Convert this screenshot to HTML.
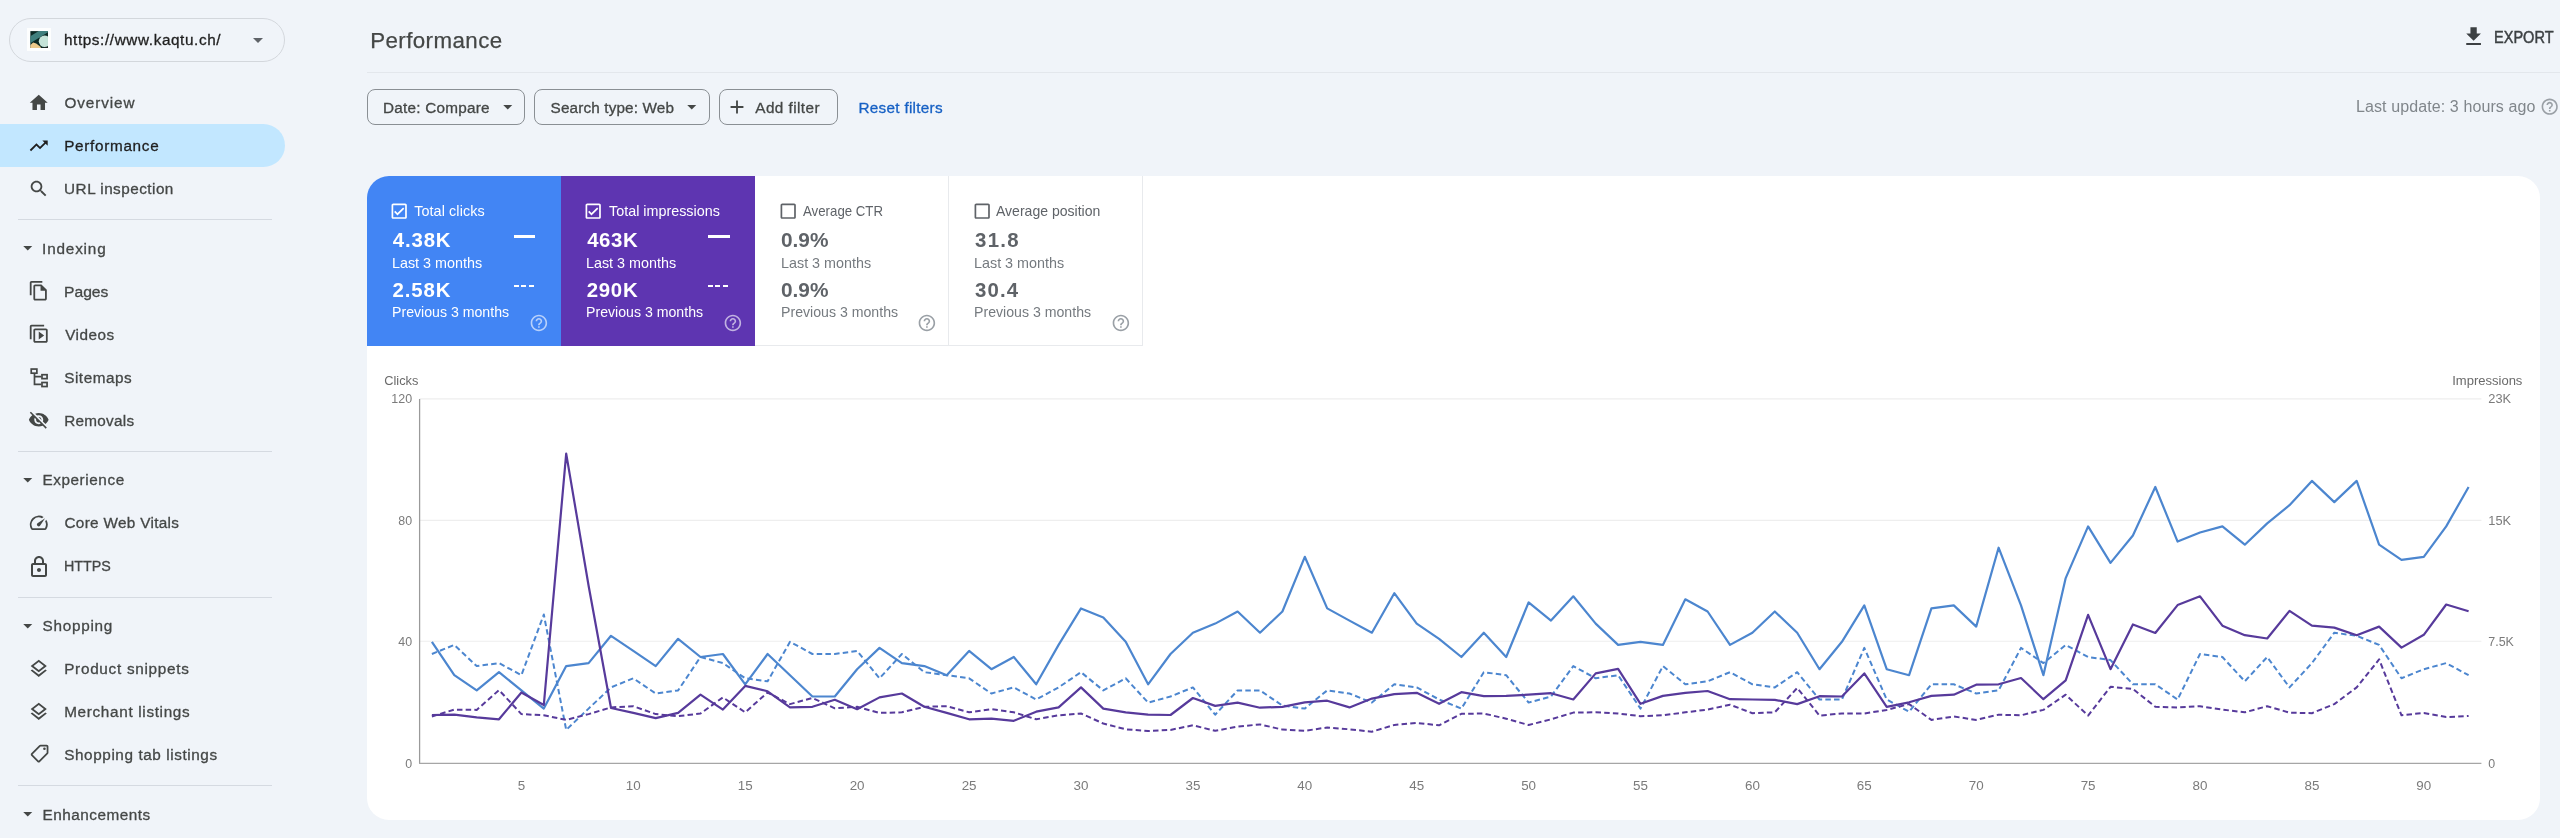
<!DOCTYPE html><html lang="en"><head><meta charset="utf-8"><title>Performance</title><style>
html,body{margin:0;padding:0}
body{width:2560px;height:838px;overflow:hidden;background:#f0f4f9;font-family:"Liberation Sans", Arial, sans-serif;position:relative}
.t{position:absolute;white-space:nowrap;transform-origin:0 50%;display:block}
.ic{position:absolute;display:block}
.abs{position:absolute}
.hr{position:absolute;height:1px;background:#d5dae1}
.chip{position:absolute;box-sizing:border-box;border:1px solid #8a8f94;border-radius:8px;height:35.4px;top:89.4px}
.tile{position:absolute;top:0;height:170px;width:194px;box-sizing:border-box}

</style></head><body><div id="app" style="position:absolute;left:0;top:0;width:2560px;height:838px;will-change:transform">
<nav class="abs" style="left:0;top:0;width:300px;height:838px">
<div class="abs" style="left:9px;top:18px;width:276px;height:43.5px;box-sizing:border-box;border:1px solid #d3d7dc;border-radius:22px"></div>
<svg class="ic" style="left:26.9px;top:27.9px" width="24.4" height="23.4" viewBox="0 0 24.4 23.4"><defs><clipPath id="fv"><rect width="17.8" height="17"/></clipPath></defs><rect width="24.4" height="23.4" fill="#fdfefe"/><g transform="translate(3.2,3.1)" clip-path="url(#fv)"><rect width="17.8" height="17" fill="#0c2925"/><path d="M0 5.2 L8.6 0 L17.8 0 L17.8 1.2 L0 12.2z" fill="#3f7f7d"/><path d="M0 17 L0 14.2 L2.9 11.4 L6 12.4 L10.6 16 L10.6 17z" fill="#ecc98b"/><circle cx="14.4" cy="10.2" r="5.8" fill="#c5e3d8"/><rect x="13.6" y="16.1" width="4.2" height=".9" fill="#2a2a2a"/></g></svg>
<svg class="ic" style="left:246.20px;top:28.40px" width="24.00" height="24.00" viewBox="0 0 24 24" fill="#5f6368"><path d="M7 10l5 5 5-5z"/></svg>
<div class="abs" style="left:0;top:124px;width:284.5px;height:43px;background:#c2e7ff;border-radius:0 21.5px 21.5px 0"></div>
<svg class="ic" style="left:28.05px;top:91.55px" width="21.50" height="21.50" viewBox="0 0 24 24" fill="#444746"><path d="M10 20v-6h4v6h5v-8h3L12 3 2 12h3v8z"/></svg>
<svg class="ic" style="left:28.05px;top:134.85px" width="21.50" height="21.50" viewBox="0 0 24 24" fill="#1f1f1f"><path d="M16 6l2.29 2.29-4.88 4.88-4-4L2 16.59 3.41 18l6-6 4 4 6.3-6.29L22 12V6z"/></svg>
<svg class="ic" style="left:28.05px;top:178.15px" width="21.50" height="21.50" viewBox="0 0 24 24" fill="#444746"><path d="M15.5 14h-.79l-.28-.27C15.41 12.59 16 11.11 16 9.5 16 5.91 13.09 3 9.5 3S3 5.91 3 9.5 5.91 16 9.5 16c1.61 0 3.09-.59 4.23-1.57l.27.28v.79l5 4.99L20.49 19l-4.99-5zm-6 0C7.01 14 5 11.99 5 9.5S7.01 5 9.5 5 14 7.01 14 9.5 11.99 14 9.5 14z"/></svg>
<svg class="ic" style="left:28.05px;top:280.25px" width="21.50" height="21.50" viewBox="0 0 24 24" fill="#444746"><path d="M16 1H4c-1.1 0-2 .9-2 2v14h2V3h12V1zm-1 4H8c-1.1 0-1.99.9-1.99 2L6 21c0 1.1.89 2 1.99 2H19c1.1 0 2-.9 2-2V11l-6-6zM8 21V7h6v5h5v9H8z"/></svg>
<svg class="ic" style="transform:scaleY(-1);left:28.15px;top:323.15px" width="21.50" height="21.50" viewBox="0 0 24 24" fill="#444746"><path d="M4 6H2v14c0 1.1.9 2 2 2h14v-2H4V6zm16-4H8c-1.1 0-2 .9-2 2v12c0 1.1.9 2 2 2h12c1.1 0 2-.9 2-2V4c0-1.1-.9-2-2-2zm0 14H8V4h12v12zM12 5.5v9l6-4.5z"/></svg>
<svg class="ic" style="left:28.05px;top:366.75px" width="21.5" height="21.5" viewBox="0 0 24 24" fill="none" stroke="#444746" stroke-width="1.9"><rect x="3.6" y="2.3" width="6.3" height="4.6"/><rect x="15.6" y="8.6" width="5.7" height="4.4"/><rect x="15.6" y="17.3" width="5.7" height="4.5"/><path d="M7.25 7.5V19.5H14.7M7.25 10.85H14.7"/></svg>
<svg class="ic" style="left:28.05px;top:409.35px" width="21.50" height="21.50" viewBox="0 0 24 24" fill="#444746"><path d="M12 7c2.76 0 5 2.24 5 5 0 .65-.13 1.26-.36 1.83l2.92 2.92c1.51-1.26 2.7-2.89 3.43-4.75-1.73-4.39-6-7.5-11-7.5-1.4 0-2.74.25-3.98.7l2.16 2.16C10.74 7.13 11.35 7 12 7zM2 4.27l2.28 2.28.46.46C3.08 8.3 1.78 10.02 1 12c1.73 4.39 6 7.5 11 7.5 1.55 0 3.03-.3 4.38-.84l.42.42L19.73 22 21 20.73 3.27 3 2 4.27zM7.53 9.8l1.55 1.55c-.05.21-.08.43-.08.65 0 1.66 1.34 3 3 3 .22 0 .44-.03.65-.08l1.55 1.55c-.67.33-1.41.53-2.2.53-2.76 0-5-2.24-5-5 0-.79.2-1.53.53-2.2zm4.31-.78l3.15 3.15.02-.16c0-1.66-1.34-3-3-3l-.17.01z"/></svg>
<svg class="ic" style="left:28.05px;top:512.25px" width="21.50" height="21.50" viewBox="0 0 24 24" fill="#444746"><path d="M20.38 8.57l-1.23 1.85a8 8 0 0 1-.22 7.58H5.07A8 8 0 0 1 15.58 6.85l1.85-1.23A10 10 0 0 0 3.35 19a2 2 0 0 0 1.72 1h13.85a2 2 0 0 0 1.74-1 10 10 0 0 0-.27-10.44zm-9.79 6.84a2 2 0 0 0 2.83 0l5.66-8.49-8.49 5.66a2 2 0 0 0 0 2.83z"/></svg>
<svg class="ic" style="left:26.80px;top:555.10px" width="24.00" height="24.00" viewBox="0 0 24 24" fill="#444746"><path d="M18 8h-1V6c0-2.76-2.24-5-5-5S7 3.24 7 6v2H6c-1.1 0-2 .9-2 2v10c0 1.1.9 2 2 2h12c1.1 0 2-.9 2-2V10c0-1.1-.9-2-2-2zM9 6c0-1.66 1.34-3 3-3s3 1.34 3 3v2H9V6zm9 14H6V10h12v10zm-6-3c1.1 0 2-.9 2-2s-.9-2-2-2-2 .9-2 2 .9 2 2 2z"/></svg>
<svg class="ic" style="left:28.05px;top:658.05px" width="21.50" height="21.50" viewBox="0 0 24 24" fill="#444746"><path d="M11.99 18.54l-7.37-5.73L3 14.07l9 7 9-7-1.63-1.27-7.38 5.74zM12 16l7.36-5.73L21 9l-9-7-9 7 1.63 1.27L12 16zm0-11.47L17.74 9 12 13.47 6.26 9 12 4.53z"/></svg>
<svg class="ic" style="left:28.05px;top:701.05px" width="21.50" height="21.50" viewBox="0 0 24 24" fill="#444746"><path d="M11.99 18.54l-7.37-5.73L3 14.07l9 7 9-7-1.63-1.27-7.38 5.74zM12 16l7.36-5.73L21 9l-9-7-9 7 1.63 1.27L12 16zm0-11.47L17.74 9 12 13.47 6.26 9 12 4.53z"/></svg>
<svg class="ic" style="transform:scaleX(-1);left:29.40px;top:743.40px" width="21.20" height="21.20" viewBox="0 0 24 24" fill="#444746"><path d="M21.41 11.58l-9-9C12.05 2.22 11.55 2 11 2H4c-1.1 0-2 .9-2 2v7c0 .55.22 1.05.59 1.42l9 9c.36.36.86.58 1.41.58s1.05-.22 1.41-.59l7-7c.37-.36.59-.86.59-1.41s-.23-1.06-.59-1.42zM13 20.01L4 11V4h7v-.01l9 9-7 7.02zM6.5 5a1.5 1.5 0 1 0 0 3 1.5 1.5 0 0 0 0-3z"/></svg>
<svg class="ic" style="left:17.45px;top:237.45px" width="21.50" height="21.50" viewBox="0 0 24 24" fill="#444746"><path d="M7 10l5 5 5-5z"/></svg>
<svg class="ic" style="left:17.45px;top:468.75px" width="21.50" height="21.50" viewBox="0 0 24 24" fill="#444746"><path d="M7 10l5 5 5-5z"/></svg>
<svg class="ic" style="left:17.45px;top:614.65px" width="21.50" height="21.50" viewBox="0 0 24 24" fill="#444746"><path d="M7 10l5 5 5-5z"/></svg>
<svg class="ic" style="left:17.45px;top:803.45px" width="21.50" height="21.50" viewBox="0 0 24 24" fill="#444746"><path d="M7 10l5 5 5-5z"/></svg>
<div class="hr" style="left:18px;width:254px;top:219.0px"></div>
<div class="hr" style="left:18px;width:254px;top:451.0px"></div>
<div class="hr" style="left:18px;width:254px;top:597.0px"></div>
<div class="hr" style="left:18px;width:254px;top:785.0px"></div>
<span class="t" id="t0" style="left:63.91px;top:32.00px;font-size:15.30px;line-height:15.30px;color:#1f1f1f;-webkit-text-stroke:0.3px currentColor;letter-spacing:0.606px;">https://www.kaqtu.ch/</span>
<span class="t" id="t1" style="left:64.40px;top:95.00px;font-size:15.30px;line-height:15.30px;color:#444746;-webkit-text-stroke:0.3px currentColor;letter-spacing:0.923px;">Overview</span>
<span class="t" id="t2" style="left:64.14px;top:138.00px;font-size:15.30px;line-height:15.30px;color:#1f1f1f;-webkit-text-stroke:0.3px currentColor;letter-spacing:0.697px;">Performance</span>
<span class="t" id="t3" style="left:64.10px;top:181.00px;font-size:15.30px;line-height:15.30px;color:#444746;-webkit-text-stroke:0.3px currentColor;letter-spacing:0.470px;">URL inspection</span>
<span class="t" id="t4" style="left:64.34px;top:284.00px;font-size:15.30px;line-height:15.30px;color:#444746;-webkit-text-stroke:0.3px currentColor;transform:scaleX(1.0233);">Pages</span>
<span class="t" id="t5" style="left:65.15px;top:327.00px;font-size:15.30px;line-height:15.30px;color:#444746;-webkit-text-stroke:0.3px currentColor;letter-spacing:0.479px;">Videos</span>
<span class="t" id="t6" style="left:64.22px;top:370.00px;font-size:15.30px;line-height:15.30px;color:#444746;-webkit-text-stroke:0.3px currentColor;letter-spacing:0.521px;">Sitemaps</span>
<span class="t" id="t7" style="left:64.18px;top:413.00px;font-size:15.30px;line-height:15.30px;color:#444746;-webkit-text-stroke:0.3px currentColor;letter-spacing:0.276px;">Removals</span>
<span class="t" id="t8" style="left:64.48px;top:515.00px;font-size:15.30px;line-height:15.30px;color:#444746;-webkit-text-stroke:0.3px currentColor;letter-spacing:0.320px;">Core Web Vitals</span>
<span class="t" id="t9" style="left:64.44px;top:558.00px;font-size:15.30px;line-height:15.30px;color:#444746;-webkit-text-stroke:0.3px currentColor;transform:scaleX(0.9355);">HTTPS</span>
<span class="t" id="t10" style="left:64.18px;top:661.00px;font-size:15.30px;line-height:15.30px;color:#444746;-webkit-text-stroke:0.3px currentColor;letter-spacing:0.719px;">Product snippets</span>
<span class="t" id="t11" style="left:64.18px;top:704.00px;font-size:15.30px;line-height:15.30px;color:#444746;-webkit-text-stroke:0.3px currentColor;letter-spacing:0.672px;">Merchant listings</span>
<span class="t" id="t12" style="left:64.22px;top:747.00px;font-size:15.30px;line-height:15.30px;color:#444746;-webkit-text-stroke:0.3px currentColor;letter-spacing:0.586px;">Shopping tab listings</span>
<span class="t" id="t13" style="left:42.11px;top:241.00px;font-size:15.30px;line-height:15.30px;color:#444746;-webkit-text-stroke:0.3px currentColor;letter-spacing:0.819px;">Indexing</span>
<span class="t" id="t14" style="left:42.42px;top:472.00px;font-size:15.30px;line-height:15.30px;color:#444746;-webkit-text-stroke:0.3px currentColor;letter-spacing:0.582px;">Experience</span>
<span class="t" id="t15" style="left:42.57px;top:618.00px;font-size:15.30px;line-height:15.30px;color:#444746;-webkit-text-stroke:0.3px currentColor;letter-spacing:0.725px;">Shopping</span>
<span class="t" id="t16" style="left:42.42px;top:807.00px;font-size:15.30px;line-height:15.30px;color:#444746;-webkit-text-stroke:0.3px currentColor;letter-spacing:0.523px;">Enhancements</span>
</nav>
<main class="abs" style="left:0;top:0;width:2560px;height:838px">
<div class="hr" style="left:367px;width:2193px;top:72px;background:#e3e7ec"></div>
<svg class="ic" style="left:2460.70px;top:24.40px" width="25.20" height="25.20" viewBox="0 0 24 24" fill="#3c4043"><path d="M19 9h-4V3H9v6H5l7 7 7-7zM5 18v2h14v-2H5z"/></svg>
<div class="chip" style="left:367px;width:158px"></div>
<div class="chip" style="left:534.4px;width:175.6px"></div>
<div class="chip" style="left:718.6px;width:119px"></div>
<svg class="ic" style="left:497.05px;top:96.45px" width="21.50" height="21.50" viewBox="0 0 24 24" fill="#444746"><path d="M7 10l5 5 5-5z"/></svg>
<svg class="ic" style="left:681.45px;top:96.45px" width="21.50" height="21.50" viewBox="0 0 24 24" fill="#444746"><path d="M7 10l5 5 5-5z"/></svg>
<svg class="ic" style="left:726.00px;top:96.00px" width="22.00" height="22.00" viewBox="0 0 24 24" fill="#444746"><path d="M19 13h-6v6h-2v-6H5v-2h6V5h2v6h6v2z"/></svg>
<svg class="ic" style="left:2539.70px;top:97.30px" width="19.40" height="19.40" viewBox="0 0 24 24" fill="#9aa0a6"><path d="M11 18h2v-2h-2v2zm1-16C6.48 2 2 6.48 2 12s4.48 10 10 10 10-4.48 10-10S17.52 2 12 2zm0 18c-4.41 0-8-3.59-8-8s3.59-8 8-8 8 3.59 8 8-3.59 8-8 8zm0-14c-2.21 0-4 1.79-4 4h2c0-1.1.9-2 2-2s2 .9 2 2c0 2-3 1.75-3 5h2c0-2.25 3-2.5 3-5 0-2.21-1.79-4-4-4z"/></svg>
<span class="t" id="t17" style="left:370.14px;top:30.00px;font-size:22.30px;line-height:22.30px;color:#444746;-webkit-text-stroke:0.25px currentColor;letter-spacing:0.436px;">Performance</span>
<span class="t" id="t18" style="left:2494.34px;top:30.00px;font-size:15.60px;line-height:15.60px;color:#3c4043;-webkit-text-stroke:0.45px currentColor;transform:scaleX(0.9332);">EXPORT</span>
<span class="t" id="t19" style="left:382.91px;top:100.00px;font-size:15.30px;line-height:15.30px;color:#444746;-webkit-text-stroke:0.3px currentColor;letter-spacing:0.244px;">Date: Compare</span>
<span class="t" id="t20" style="left:550.57px;top:100.00px;font-size:15.30px;line-height:15.30px;color:#444746;-webkit-text-stroke:0.3px currentColor;letter-spacing:0.138px;">Search type: Web</span>
<span class="t" id="t21" style="left:755.29px;top:100.00px;font-size:15.30px;line-height:15.30px;color:#444746;-webkit-text-stroke:0.3px currentColor;letter-spacing:0.438px;">Add filter</span>
<span class="t" id="t22" style="left:858.51px;top:100.00px;font-size:15.30px;line-height:15.30px;color:#1660c4;-webkit-text-stroke:0.3px currentColor;letter-spacing:0.280px;">Reset filters</span>
<span class="t" id="t23" style="left:2356.00px;top:99.00px;font-size:16.00px;line-height:16.00px;color:#80868b;letter-spacing:0.104px;">Last update: 3 hours ago</span>
<section class="abs" style="left:367px;top:176px;width:2173px;height:644px;background:#fff;border-radius:22px;overflow:hidden">
<div class="tile" style="left:0;background:#4285f4"></div>
<div class="tile" style="left:194px;background:#5e35b1"></div>
<div class="tile" style="left:388px;border-right:1px solid #e8eaed;border-bottom:1px solid #e8eaed"></div>
<div class="tile" style="left:582px;border-right:1px solid #e8eaed;border-bottom:1px solid #e8eaed"></div>
</section>
<svg class="ic" style="left:389.00px;top:200.60px" width="20.40" height="20.40" viewBox="0 0 24 24" fill="#fff"><path d="M19 3H5c-1.1 0-2 .9-2 2v14c0 1.1.9 2 2 2h14c1.1 0 2-.9 2-2V5c0-1.1-.9-2-2-2zm0 16H5V5h14v14zM17.99 9l-1.41-1.42-6.59 6.59-2.58-2.57-1.42 1.41 4 3.99z"/></svg>
<svg class="ic" style="left:528.50px;top:313.40px" width="19.80" height="19.80" viewBox="0 0 24 24" fill="rgba(255,255,255,.62)"><path d="M11 18h2v-2h-2v2zm1-16C6.48 2 2 6.48 2 12s4.48 10 10 10 10-4.48 10-10S17.52 2 12 2zm0 18c-4.41 0-8-3.59-8-8s3.59-8 8-8 8 3.59 8 8-3.59 8-8 8zm0-14c-2.21 0-4 1.79-4 4h2c0-1.1.9-2 2-2s2 .9 2 2c0 2-3 1.75-3 5h2c0-2.25 3-2.5 3-5 0-2.21-1.79-4-4-4z"/></svg>
<div class="abs" style="left:514.1px;top:235.2px;width:21.3px;height:2.6px;background:#fff"></div>
<div class="abs" style="left:513.8px;top:285px;width:20px;height:2.4px;background:linear-gradient(90deg,#fff 0,#fff 5px,transparent 5px,transparent 7.5px,#fff 7.5px,#fff 12.5px,transparent 12.5px,transparent 15px,#fff 15px)"></div>
<svg class="ic" style="left:583.20px;top:200.60px" width="20.40" height="20.40" viewBox="0 0 24 24" fill="#fff"><path d="M19 3H5c-1.1 0-2 .9-2 2v14c0 1.1.9 2 2 2h14c1.1 0 2-.9 2-2V5c0-1.1-.9-2-2-2zm0 16H5V5h14v14zM17.99 9l-1.41-1.42-6.59 6.59-2.58-2.57-1.42 1.41 4 3.99z"/></svg>
<svg class="ic" style="left:722.70px;top:313.40px" width="19.80" height="19.80" viewBox="0 0 24 24" fill="rgba(255,255,255,.62)"><path d="M11 18h2v-2h-2v2zm1-16C6.48 2 2 6.48 2 12s4.48 10 10 10 10-4.48 10-10S17.52 2 12 2zm0 18c-4.41 0-8-3.59-8-8s3.59-8 8-8 8 3.59 8 8-3.59 8-8 8zm0-14c-2.21 0-4 1.79-4 4h2c0-1.1.9-2 2-2s2 .9 2 2c0 2-3 1.75-3 5h2c0-2.25 3-2.5 3-5 0-2.21-1.79-4-4-4z"/></svg>
<div class="abs" style="left:708.3px;top:235.2px;width:21.3px;height:2.6px;background:#fff"></div>
<div class="abs" style="left:708.0px;top:285px;width:20px;height:2.4px;background:linear-gradient(90deg,#fff 0,#fff 5px,transparent 5px,transparent 7.5px,#fff 7.5px,#fff 12.5px,transparent 12.5px,transparent 15px,#fff 15px)"></div>
<svg class="ic" style="left:777.90px;top:200.60px" width="20.40" height="20.40" viewBox="0 0 24 24" fill="#5f6368"><path d="M19 5v14H5V5h14m0-2H5c-1.1 0-2 .9-2 2v14c0 1.1.9 2 2 2h14c1.1 0 2-.9 2-2V5c0-1.1-.9-2-2-2z"/></svg>
<svg class="ic" style="left:917.00px;top:313.40px" width="19.80" height="19.80" viewBox="0 0 24 24" fill="#9aa0a6"><path d="M11 18h2v-2h-2v2zm1-16C6.48 2 2 6.48 2 12s4.48 10 10 10 10-4.48 10-10S17.52 2 12 2zm0 18c-4.41 0-8-3.59-8-8s3.59-8 8-8 8 3.59 8 8-3.59 8-8 8zm0-14c-2.21 0-4 1.79-4 4h2c0-1.1.9-2 2-2s2 .9 2 2c0 2-3 1.75-3 5h2c0-2.25 3-2.5 3-5 0-2.21-1.79-4-4-4z"/></svg>
<svg class="ic" style="left:972.10px;top:200.60px" width="20.40" height="20.40" viewBox="0 0 24 24" fill="#5f6368"><path d="M19 5v14H5V5h14m0-2H5c-1.1 0-2 .9-2 2v14c0 1.1.9 2 2 2h14c1.1 0 2-.9 2-2V5c0-1.1-.9-2-2-2z"/></svg>
<svg class="ic" style="left:1111.20px;top:313.40px" width="19.80" height="19.80" viewBox="0 0 24 24" fill="#9aa0a6"><path d="M11 18h2v-2h-2v2zm1-16C6.48 2 2 6.48 2 12s4.48 10 10 10 10-4.48 10-10S17.52 2 12 2zm0 18c-4.41 0-8-3.59-8-8s3.59-8 8-8 8 3.59 8 8-3.59 8-8 8zm0-14c-2.21 0-4 1.79-4 4h2c0-1.1.9-2 2-2s2 .9 2 2c0 2-3 1.75-3 5h2c0-2.25 3-2.5 3-5 0-2.21-1.79-4-4-4z"/></svg>
<span class="t" id="t24" style="left:414.14px;top:204.00px;font-size:14.40px;line-height:14.40px;color:#fff;letter-spacing:0.092px;">Total clicks</span>
<span class="t" id="t25" style="left:392.83px;top:230.00px;font-size:20.40px;line-height:20.40px;color:#fff;font-weight:700;letter-spacing:0.828px;">4.38K</span>
<span class="t" id="t26" style="left:392.31px;top:256.00px;font-size:14.40px;line-height:14.40px;color:#fff;transform:scaleX(0.9966);">Last 3 months</span>
<span class="t" id="t27" style="left:392.43px;top:280.00px;font-size:20.40px;line-height:20.40px;color:#fff;font-weight:700;letter-spacing:0.930px;">2.58K</span>
<span class="t" id="t28" style="left:392.34px;top:305.00px;font-size:14.40px;line-height:14.40px;color:#fff;transform:scaleX(0.9822);">Previous 3 months</span>
<span class="t" id="t29" style="left:608.69px;top:204.00px;font-size:14.40px;line-height:14.40px;color:#fff;transform:scaleX(0.9974);">Total impressions</span>
<span class="t" id="t30" style="left:587.18px;top:230.00px;font-size:20.40px;line-height:20.40px;color:#fff;font-weight:700;letter-spacing:0.585px;">463K</span>
<span class="t" id="t31" style="left:585.91px;top:256.00px;font-size:14.40px;line-height:14.40px;color:#fff;transform:scaleX(0.9966);">Last 3 months</span>
<span class="t" id="t32" style="left:586.63px;top:280.00px;font-size:20.40px;line-height:20.40px;color:#fff;font-weight:700;letter-spacing:0.766px;">290K</span>
<span class="t" id="t33" style="left:585.93px;top:305.00px;font-size:14.40px;line-height:14.40px;color:#fff;transform:scaleX(0.9822);">Previous 3 months</span>
<span class="t" id="t34" style="left:802.71px;top:204.00px;font-size:14.40px;line-height:14.40px;color:#5f6368;transform:scaleX(0.9208);">Average CTR</span>
<span class="t" id="t35" style="left:781.10px;top:230.00px;font-size:20.40px;line-height:20.40px;color:#5f6368;font-weight:700;transform:scaleX(1.0210);">0.9%</span>
<span class="t" id="t36" style="left:780.79px;top:256.00px;font-size:14.40px;line-height:14.40px;color:#757a7f;transform:scaleX(0.9973);">Last 3 months</span>
<span class="t" id="t37" style="left:781.10px;top:280.00px;font-size:20.40px;line-height:20.40px;color:#5f6368;font-weight:700;transform:scaleX(1.0210);">0.9%</span>
<span class="t" id="t38" style="left:780.82px;top:305.00px;font-size:14.40px;line-height:14.40px;color:#757a7f;transform:scaleX(0.9825);">Previous 3 months</span>
<span class="t" id="t39" style="left:996.29px;top:204.00px;font-size:14.40px;line-height:14.40px;color:#5f6368;transform:scaleX(0.9752);">Average position</span>
<span class="t" id="t40" style="left:975.11px;top:230.00px;font-size:20.40px;line-height:20.40px;color:#5f6368;font-weight:700;letter-spacing:1.277px;">31.8</span>
<span class="t" id="t41" style="left:974.39px;top:256.00px;font-size:14.40px;line-height:14.40px;color:#757a7f;transform:scaleX(0.9973);">Last 3 months</span>
<span class="t" id="t42" style="left:975.11px;top:280.00px;font-size:20.40px;line-height:20.40px;color:#5f6368;font-weight:700;letter-spacing:1.073px;">30.4</span>
<span class="t" id="t43" style="left:974.42px;top:305.00px;font-size:14.40px;line-height:14.40px;color:#757a7f;transform:scaleX(0.9825);">Previous 3 months</span>
<svg class="abs" style="left:0;top:0;font-family:'Liberation Sans', Arial, sans-serif" width="2560" height="838" viewBox="0 0 2560 838" font-size="13.4" fill="#7b7b7b">
<line x1="419.6" x2="2481.4" y1="398.9" y2="398.9" stroke="#eeeeee" stroke-width="1.1"/>
<line x1="419.6" x2="2481.4" y1="520.4" y2="520.4" stroke="#eeeeee" stroke-width="1.1"/>
<line x1="419.6" x2="2481.4" y1="641.3" y2="641.3" stroke="#eeeeee" stroke-width="1.1"/>
<line x1="419.6" x2="419.6" y1="398.9" y2="763.3" stroke="#9a9a9a" stroke-width="1.25"/>
<line x1="419" x2="2481.4" y1="763.4" y2="763.4" stroke="#a6a6a6" stroke-width="1.25"/>
<text x="384.3" y="385" textLength="34.1" lengthAdjust="spacingAndGlyphs" fill="#6a6a6a">Clicks</text>
<text x="2452.2" y="385" textLength="70.2" lengthAdjust="spacingAndGlyphs" fill="#6a6a6a">Impressions</text>
<text x="391.3" y="403.4" textLength="20.8" lengthAdjust="spacingAndGlyphs">120</text>
<text x="398.3" y="525.0" textLength="13.8" lengthAdjust="spacingAndGlyphs">80</text>
<text x="398.3" y="645.9" textLength="13.8" lengthAdjust="spacingAndGlyphs">40</text>
<text x="405.2" y="767.9" textLength="6.9" lengthAdjust="spacingAndGlyphs">0</text>
<text x="2488.3" y="403.4" textLength="22.8" lengthAdjust="spacingAndGlyphs">23K</text>
<text x="2488.3" y="525.0" textLength="22.8" lengthAdjust="spacingAndGlyphs">15K</text>
<text x="2488.3" y="645.9" textLength="25.6" lengthAdjust="spacingAndGlyphs">7.5K</text>
<text x="2488.3" y="767.9" textLength="6.9" lengthAdjust="spacingAndGlyphs">0</text>
<text x="521.4" y="789.6" text-anchor="middle">5</text>
<text x="633.3" y="789.6" text-anchor="middle">10</text>
<text x="745.2" y="789.6" text-anchor="middle">15</text>
<text x="857.1" y="789.6" text-anchor="middle">20</text>
<text x="969.1" y="789.6" text-anchor="middle">25</text>
<text x="1081.0" y="789.6" text-anchor="middle">30</text>
<text x="1192.9" y="789.6" text-anchor="middle">35</text>
<text x="1304.8" y="789.6" text-anchor="middle">40</text>
<text x="1416.7" y="789.6" text-anchor="middle">45</text>
<text x="1528.6" y="789.6" text-anchor="middle">50</text>
<text x="1640.5" y="789.6" text-anchor="middle">55</text>
<text x="1752.4" y="789.6" text-anchor="middle">60</text>
<text x="1864.3" y="789.6" text-anchor="middle">65</text>
<text x="1976.2" y="789.6" text-anchor="middle">70</text>
<text x="2088.1" y="789.6" text-anchor="middle">75</text>
<text x="2200.0" y="789.6" text-anchor="middle">80</text>
<text x="2311.9" y="789.6" text-anchor="middle">85</text>
<text x="2423.8" y="789.6" text-anchor="middle">90</text>
<polyline fill="none" stroke="#4c86cf" stroke-width="2" stroke-dasharray="5.5 3.2" stroke-linejoin="round" points="431.9,654.0 454.3,644.9 476.7,666.1 499.0,663.1 521.4,675.2 543.8,614.5 566.2,729.9 588.6,708.6 611.0,687.4 633.3,678.3 655.7,693.5 678.1,690.4 700.5,657.0 722.9,663.1 745.2,678.3 767.6,681.3 790.0,641.8 812.4,654.0 834.8,654.0 857.1,650.9 879.5,678.3 901.9,654.0 924.3,672.2 946.7,675.2 969.1,678.3 991.4,693.5 1013.8,687.4 1036.2,699.5 1058.6,687.4 1081.0,672.2 1103.3,690.4 1125.7,678.3 1148.1,702.6 1170.5,696.5 1192.9,687.4 1215.2,714.7 1237.6,690.4 1260.0,690.4 1282.4,705.6 1304.8,708.6 1327.2,690.4 1349.5,693.5 1371.9,702.6 1394.3,684.3 1416.7,687.4 1439.1,699.5 1461.4,708.6 1483.8,672.2 1506.2,675.2 1528.6,702.6 1551.0,696.5 1573.3,666.1 1595.7,678.3 1618.1,675.2 1640.5,708.6 1662.9,666.1 1685.3,684.3 1707.6,681.3 1730.0,672.2 1752.4,684.3 1774.8,687.4 1797.2,672.2 1819.5,699.5 1841.9,699.5 1864.3,647.9 1886.7,699.5 1909.1,711.7 1931.4,684.3 1953.8,684.3 1976.2,693.5 1998.6,690.4 2021.0,647.9 2043.4,663.1 2065.7,644.9 2088.1,657.0 2110.5,660.1 2132.9,684.3 2155.3,684.3 2177.6,699.5 2200.0,654.0 2222.4,657.0 2244.8,681.3 2267.2,657.0 2289.5,687.4 2311.9,663.1 2334.3,632.7 2356.7,635.8 2379.1,644.9 2401.5,678.3 2423.8,669.2 2446.2,663.1 2468.6,675.2"/>
<polyline fill="none" stroke="#573a9b" stroke-width="2" stroke-dasharray="5.5 3.2" stroke-linejoin="round" points="431.9,716.5 454.3,709.6 476.7,709.9 499.0,690.1 521.4,714.1 543.8,715.3 566.2,719.9 588.6,714.1 611.0,707.4 633.3,706.2 655.7,714.1 678.1,716.2 700.5,713.5 722.9,697.4 745.2,712.3 767.6,692.5 790.0,704.1 812.4,698.0 834.8,708.3 857.1,706.8 879.5,712.9 901.9,712.3 924.3,706.8 946.7,706.2 969.1,712.3 991.4,709.2 1013.8,712.3 1036.2,719.3 1058.6,715.3 1081.0,713.5 1103.3,723.5 1125.7,729.3 1148.1,731.1 1170.5,729.9 1192.9,725.3 1215.2,730.8 1237.6,726.6 1260.0,724.4 1282.4,729.6 1304.8,730.8 1327.2,727.5 1349.5,729.3 1371.9,731.7 1394.3,725.0 1416.7,722.9 1439.1,725.3 1461.4,713.8 1483.8,713.5 1506.2,718.7 1528.6,725.0 1551.0,719.3 1573.3,712.6 1595.7,712.3 1618.1,713.5 1640.5,716.2 1662.9,715.3 1685.3,712.3 1707.6,709.6 1730.0,704.7 1752.4,713.2 1774.8,712.3 1797.2,688.0 1819.5,715.6 1841.9,713.5 1864.3,713.5 1886.7,709.9 1909.1,704.1 1931.4,719.9 1953.8,716.5 1976.2,719.9 1998.6,714.7 2021.0,715.3 2043.4,709.9 2065.7,694.7 2088.1,715.6 2110.5,686.8 2132.9,688.9 2155.3,706.8 2177.6,707.4 2200.0,706.2 2222.4,709.6 2244.8,712.3 2267.2,706.2 2289.5,712.6 2311.9,713.2 2334.3,704.1 2356.7,687.4 2379.1,659.4 2401.5,715.3 2423.8,712.9 2446.2,717.1 2468.6,715.9"/>
<polyline fill="none" stroke="#4c86cf" stroke-width="2.2" stroke-linejoin="round" points="431.9,641.8 454.3,675.2 476.7,690.4 499.0,672.2 521.4,690.4 543.8,708.6 566.2,666.1 588.6,663.1 611.0,635.8 633.3,650.9 655.7,666.1 678.1,638.8 700.5,657.0 722.9,654.0 745.2,684.3 767.6,654.0 790.0,675.2 812.4,696.5 834.8,696.5 857.1,669.2 879.5,647.9 901.9,663.1 924.3,666.1 946.7,675.2 969.1,650.9 991.4,669.2 1013.8,657.0 1036.2,684.3 1058.6,644.9 1081.0,608.4 1103.3,617.5 1125.7,641.8 1148.1,684.3 1170.5,654.0 1192.9,632.7 1215.2,623.6 1237.6,611.5 1260.0,632.7 1282.4,611.5 1304.8,556.8 1327.2,608.4 1349.5,620.6 1371.9,632.7 1394.3,593.2 1416.7,623.6 1439.1,638.8 1461.4,657.0 1483.8,632.7 1506.2,657.0 1528.6,602.4 1551.0,620.6 1573.3,596.3 1595.7,623.6 1618.1,644.9 1640.5,641.8 1662.9,644.9 1685.3,599.3 1707.6,611.5 1730.0,644.9 1752.4,632.7 1774.8,611.5 1797.2,632.7 1819.5,669.2 1841.9,641.8 1864.3,605.4 1886.7,669.2 1909.1,675.2 1931.4,608.4 1953.8,605.4 1976.2,626.6 1998.6,547.7 2021.0,605.4 2043.4,675.2 2065.7,578.1 2088.1,526.4 2110.5,562.9 2132.9,535.5 2155.3,487.0 2177.6,541.6 2200.0,532.5 2222.4,526.4 2244.8,544.7 2267.2,523.4 2289.5,505.2 2311.9,480.9 2334.3,502.1 2356.7,480.9 2379.1,544.7 2401.5,559.8 2423.8,556.8 2446.2,526.4 2468.6,487.0"/>
<polyline fill="none" stroke="#573a9b" stroke-width="2.2" stroke-linejoin="round" points="431.9,715.0 454.3,714.7 476.7,717.4 499.0,719.3 521.4,692.5 543.8,705.0 566.2,453.6 588.6,585.7 611.0,708.0 633.3,712.9 655.7,718.1 678.1,712.9 700.5,694.7 722.9,709.6 745.2,685.9 767.6,691.3 790.0,707.4 812.4,706.8 834.8,699.8 857.1,709.2 879.5,697.4 901.9,693.5 924.3,706.8 946.7,712.9 969.1,719.3 991.4,718.7 1013.8,720.8 1036.2,711.7 1058.6,707.4 1081.0,687.4 1103.3,708.6 1125.7,712.3 1148.1,714.7 1170.5,715.0 1192.9,698.0 1215.2,705.9 1237.6,702.6 1260.0,707.7 1282.4,706.8 1304.8,702.3 1327.2,700.7 1349.5,707.4 1371.9,698.6 1394.3,694.1 1416.7,692.8 1439.1,703.8 1461.4,692.2 1483.8,696.2 1506.2,695.9 1528.6,694.7 1551.0,693.2 1573.3,699.5 1595.7,673.4 1618.1,668.9 1640.5,703.8 1662.9,695.9 1685.3,692.8 1707.6,691.0 1730.0,699.2 1752.4,699.5 1774.8,699.8 1797.2,704.1 1819.5,696.2 1841.9,696.5 1864.3,673.4 1886.7,706.8 1909.1,702.3 1931.4,695.9 1953.8,694.7 1976.2,684.7 1998.6,684.3 2021.0,678.0 2043.4,699.2 2065.7,680.4 2088.1,614.8 2110.5,669.2 2132.9,624.5 2155.3,633.0 2177.6,605.1 2200.0,596.3 2222.4,625.7 2244.8,635.2 2267.2,638.5 2289.5,610.9 2311.9,625.7 2334.3,627.6 2356.7,635.2 2379.1,626.6 2401.5,647.6 2423.8,634.8 2446.2,604.5 2468.6,611.2"/>
</svg>
</main></div></body></html>
